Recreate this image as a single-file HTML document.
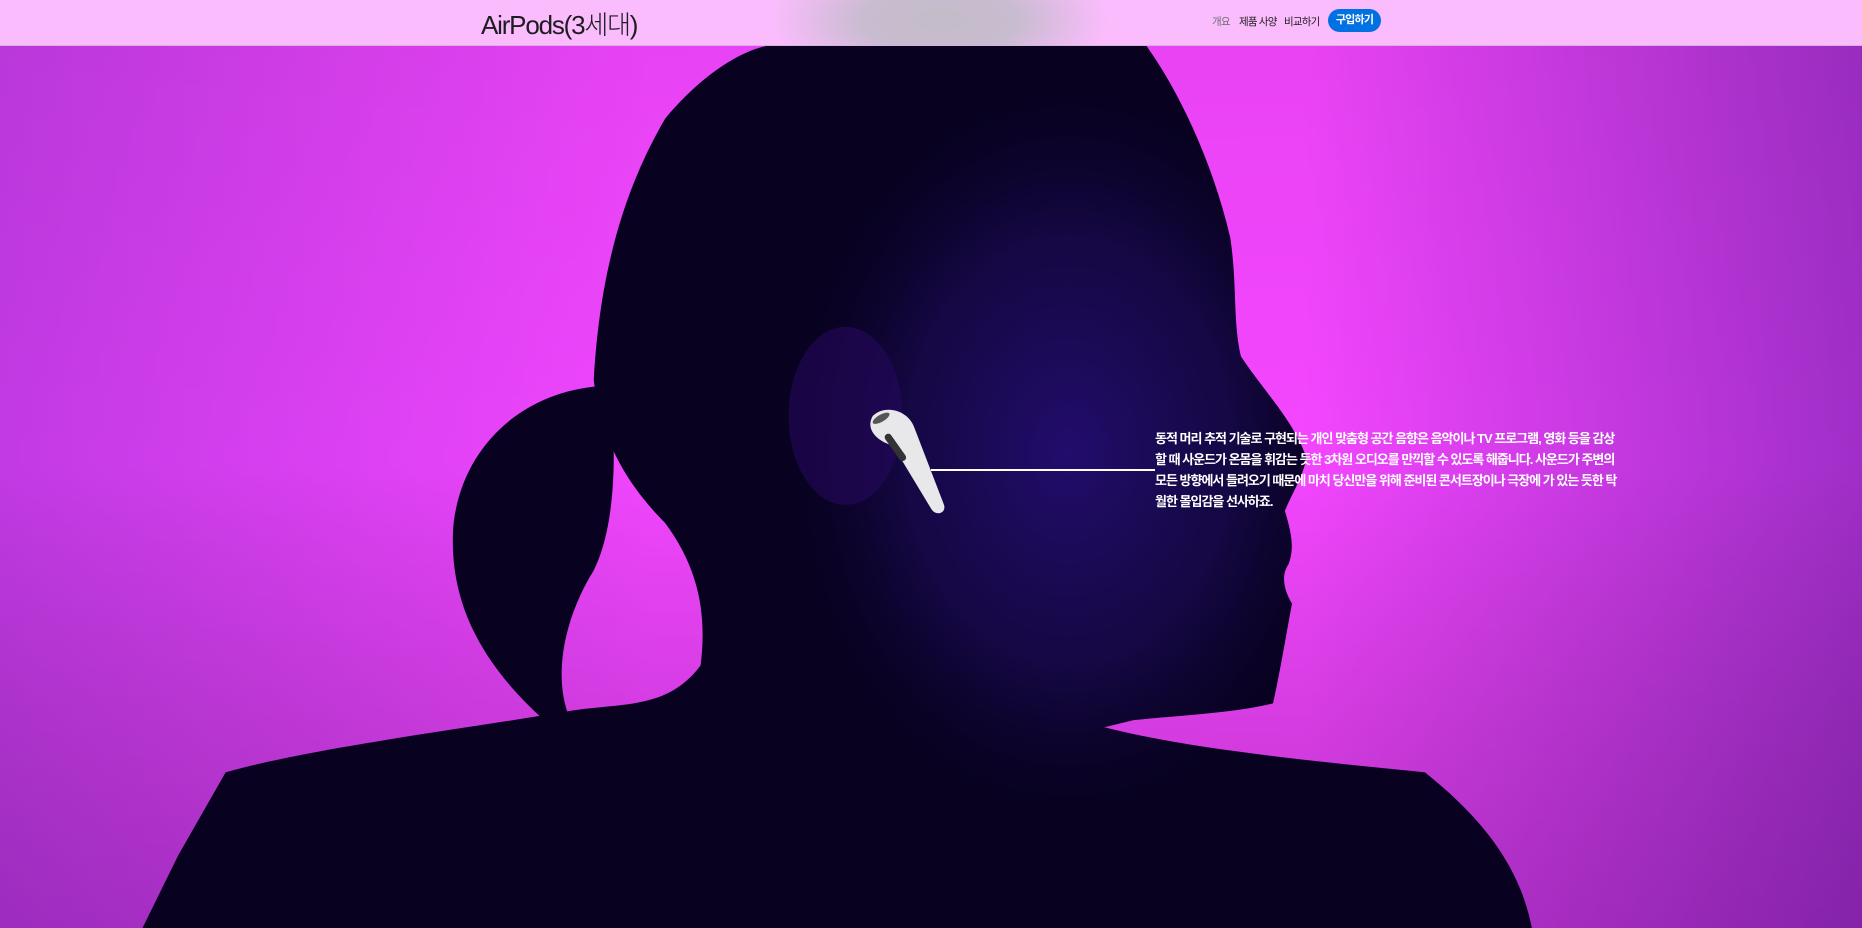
<!DOCTYPE html>
<html><head><meta charset="utf-8">
<style>
html,body{margin:0;padding:0;width:1862px;height:928px;overflow:hidden;background:#e040f5;font-family:"Liberation Sans","Noto Sans CJK KR",sans-serif}
#bg{position:absolute;left:0;top:0;width:1862px;height:928px}
header{position:absolute;left:0;top:0;width:1862px;height:45px;background:radial-gradient(ellipse 170px 70px at 940px 20px,#c4bcc8 0%,#c8bcd0 45%,rgba(251,186,252,0) 100%),#fbbcfd;border-bottom:1px solid #d8b0dc}
.title{position:absolute;left:481px;top:5px;font-size:26px;color:#1d1d1f;letter-spacing:-1.2px;font-family:"Liberation Sans","Noto Sans CJK KR",sans-serif;font-weight:300}
.nav{position:absolute;top:14px;font-size:10.5px;color:#1d1d1f;letter-spacing:-0.8px}
.btn{position:absolute;left:1328px;top:9px;width:53px;height:23px;border-radius:12px;background:#0071e3;color:#fff;font-size:11px;font-weight:bold;text-align:center;line-height:23px;letter-spacing:-0.8px}
.txt{position:absolute;left:1155px;top:428px;width:466px;color:#fff;font-size:13px;font-weight:bold;line-height:21px;letter-spacing:-1px}
.line{position:absolute;left:931px;top:469px;width:224px;height:2px;background:#fff}
</style></head><body>
<svg id="bg" viewBox="0 0 1568 781" preserveAspectRatio="none">
<defs>
<linearGradient id="g" x1="0" x2="1" y1="0" y2="0">
<stop offset="0" stop-color="#c23ae4"/><stop offset="0.35" stop-color="#f246ff"/><stop offset="0.7" stop-color="#f446ff"/><stop offset="1" stop-color="#a02ec8"/></linearGradient>
<linearGradient id="v" x1="0" x2="0" y1="0" y2="1"><stop offset="0" stop-color="#000" stop-opacity="0.05"/><stop offset="0.5" stop-color="#000" stop-opacity="0"/><stop offset="1" stop-color="#300050" stop-opacity="0.25"/></linearGradient>
<radialGradient id="face" cx="0.5" cy="0.5" r="0.5"><stop offset="0" stop-color="#3414a0" stop-opacity="0.6"/><stop offset="0.6" stop-color="#28107a" stop-opacity="0.4"/><stop offset="1" stop-color="#1a0550" stop-opacity="0"/></radialGradient>
<clipPath id="cp"><path id="sil" d="M120,781 L150,720 L190,650 C260,630 380,615 470,600 C520,590 560,600 590,560 C595,520 590,480 560,440 C520,400 505,360 500,320 C505,230 525,160 560,100 C595,58 630,40 650,38 L965,38 C995,80 1022,140 1036,200 C1042,240 1038,270 1045,300 C1065,330 1090,355 1100,385 C1098,400 1088,415 1082,430 C1088,450 1090,462 1085,475 C1078,485 1082,498 1088,508 C1082,540 1078,565 1072,592 C1040,600 995,602 955,606 L930,612 C1000,630 1100,640 1200,650 C1250,690 1280,730 1290,781 Z"/></clipPath>
</defs>
<rect width="1568" height="781" fill="url(#g)"/>
<rect width="1568" height="781" fill="url(#v)"/>
<path fill="#080220" d="M505,325 C440,330 390,375 382,440 C376,510 410,565 465,612 L480,605 C465,570 475,520 500,480 C515,450 520,400 515,340Z"/>
<use href="#sil" fill="#080220"/>
<g clip-path="url(#cp)">
<ellipse cx="900" cy="380" rx="230" ry="300" fill="url(#face)"/>
</g>
<ellipse cx="712" cy="350" rx="48" ry="75" fill="#24095e" opacity="0.6"/>
<path d="M735,350 C745,340 765,345 770,360 L795,425 C797,432 788,435 784,428 L752,375 C740,372 728,362 735,350Z" fill="#e8e8ea"/>
<path d="M748,368 L760,385" stroke="#333" stroke-width="6" stroke-linecap="round"/>
<ellipse cx="742" cy="352" rx="8" ry="3" fill="#555" transform="rotate(-30 742 352)"/>
</svg>
<header>
<div class="title">AirPods(3세대)</div>
<div class="nav" style="left:1212px;color:#6e6e73">개요</div>
<div class="nav" style="left:1239px">제품 사양</div>
<div class="nav" style="left:1284px">비교하기</div>
<div class="btn">구입하기</div>
</header>
<div class="line"></div>
<div class="txt">동적 머리 추적 기술로 구현되는 개인 맞춤형 공간 음향은 음악이나 TV 프로그램, 영화 등을 감상할 때 사운드가 온몸을 휘감는 듯한 3차원 오디오를 만끽할 수 있도록 해줍니다. 사운드가 주변의 모든 방향에서 들려오기 때문에 마치 당신만을 위해 준비된 콘서트장이나 극장에 가 있는 듯한 탁월한 몰입감을 선사하죠.</div>
</body></html>
